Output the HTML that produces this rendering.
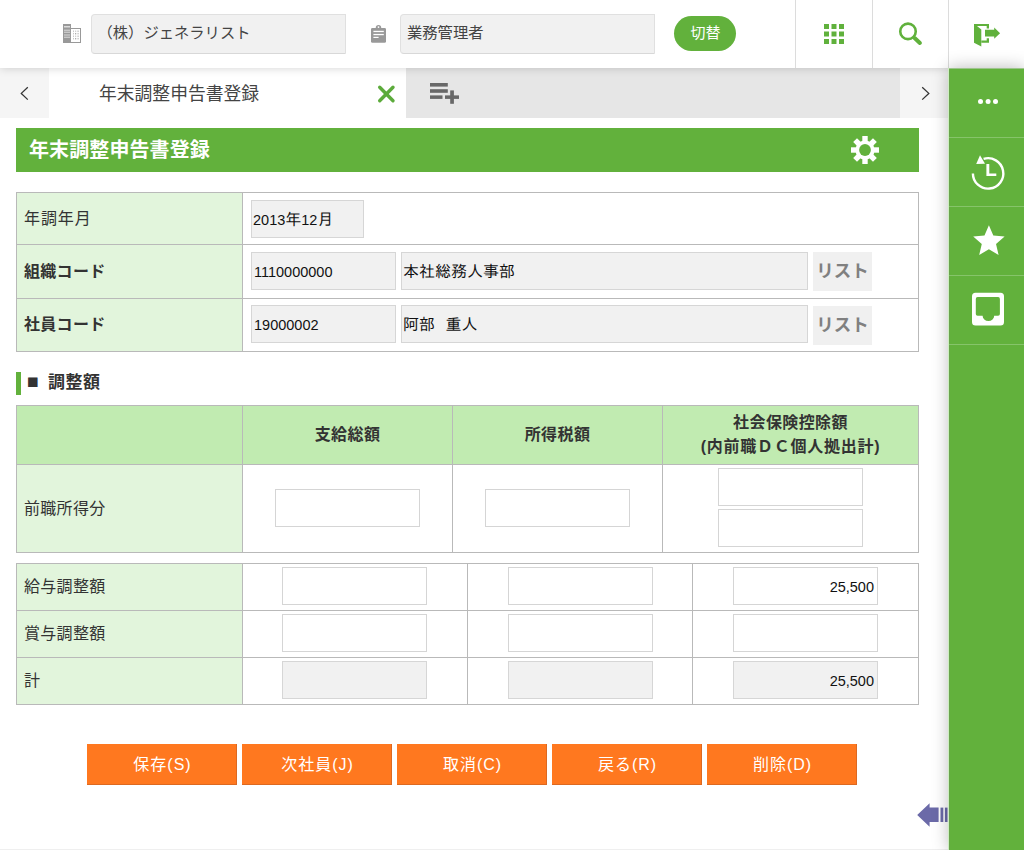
<!DOCTYPE html>
<html lang="ja">
<head>
<meta charset="utf-8">
<title>年末調整申告書登録</title>
<style>
*{box-sizing:border-box;margin:0;padding:0}
html,body{width:1024px;height:850px;overflow:hidden;background:#fff}
body{position:relative;font-family:"Liberation Sans","Noto Sans CJK JP",sans-serif;font-size:16px;color:#333}
.abs{position:absolute}
/* header */
#hdr{position:absolute;left:0;top:0;width:1024px;height:68px;background:#fff;box-shadow:0 0 9px rgba(0,0,0,.18);z-index:3}
.hin{position:absolute;top:14px;height:40px;background:#f1f1f1;border:1px solid #e0e0e0;border-bottom-color:#d8d8d8;border-radius:4px 0 0 4px;font-size:15.3px;line-height:36px;color:#444;white-space:nowrap;overflow:hidden}
.vdiv{position:absolute;top:0;width:1px;height:68px;background:#dcdcdc}
#sw{position:absolute;left:674px;top:16px;width:62px;height:35px;border-radius:18px;background:#62b13c;color:#fff;font-size:15px;line-height:34px;text-align:center;padding-left:1px}
/* tab bar */
#tabs{position:absolute;left:0;top:68px;width:949px;height:50px;background:#e6e6e6}
#tabs .arr{position:absolute;top:0;width:49px;height:50px;background:#f5f5f5}
#tab1{position:absolute;left:49px;top:0;width:357px;height:50px;background:#fff;font-size:17.8px;line-height:52px;color:#444}
/* sidebar */
#side{position:absolute;left:949px;top:68px;width:75px;height:782px;background:#62b13c;border-top:1px solid #9dc48c;box-shadow:-1px 0 0 #cdeec0,0 0 16px rgba(0,0,0,.28),inset 1px 0 0 #6aa34d;z-index:4}
#side .it{position:relative;height:69px;border-bottom:1px solid #86c46a}
/* main */
#ttl{position:absolute;left:16px;top:128px;width:903px;height:44px;background:#62b13c;color:#fff;font-weight:bold;font-size:20px;line-height:45px;padding-left:13px;letter-spacing:.1px}
.c{position:absolute;border:1px solid #b9b9b9;background:#fff}
.c.lb{background:#e2f5dc;font-size:16px;color:#333;letter-spacing:.3px}
.c.hd{background:#c1ebb1;font-weight:bold;text-align:center;font-size:16px;line-height:24px;color:#333;letter-spacing:.4px}
.c .vt{position:absolute;left:7px;top:50%;transform:translateY(-50%);white-space:nowrap;line-height:24px}
.c .vc{position:absolute;left:0;right:0;top:50%;transform:translateY(-50%);white-space:nowrap}
.in{position:absolute;height:38px;border:1px solid #d5d5d5;background:#fff;font-family:"Liberation Sans","IPAGothic","Noto Sans CJK JP",sans-serif;font-size:14.5px;line-height:38px;color:#111;white-space:nowrap;overflow:hidden}
.in .k,.in.k{font-size:16px}
.in.ro{background:#f1f1f1;border-color:#d6d6d6}
.in.num{text-align:right;padding-right:3px}
.lst{position:absolute;width:59px;height:39px;background:#f0f0f0;color:#808080;font-weight:bold;font-size:17.5px;line-height:38px;text-align:center}
#sec{position:absolute;left:16px;top:372px;width:200px;height:23px;border-left:5px solid #62b13c;font-weight:bold;color:#333;white-space:nowrap}
#sec .sq{position:absolute;left:6px;top:-1px;font-size:19.5px;line-height:20px}
#sec .st{position:absolute;left:27px;top:1px;font-size:17px;line-height:20px;letter-spacing:.5px}
.btn{position:absolute;top:744px;width:150px;height:41px;background:#ff781f;box-shadow:inset -1px -1px 0 rgba(120,60,40,.25);color:#fff;font-size:16px;line-height:41px;text-align:center;letter-spacing:1px;padding-left:1px}
</style>
</head>
<body>

<!-- HEADER -->
<div id="hdr">
  <div class="hin" style="left:91px;width:255px;padding-left:5.5px">（株）ジェネラリスト</div>
  <div class="hin" style="left:400px;width:255px;padding-left:6px">業務管理者</div>
  <div id="sw">切替</div>
<svg class="abs" style="left:0;top:0" width="1024" height="68" viewBox="0 0 1024 68">
    <!-- building -->
    <rect x="63" y="24" width="8" height="19" fill="#999"/>
    <g fill="#dcdcdc"><rect x="64" y="26" width="6" height="1.5"/><rect x="64" y="29.7" width="6" height="1"/><rect x="64" y="31.7" width="6" height="1"/><rect x="64" y="34.5" width="6" height="1"/><rect x="64" y="36.7" width="6" height="1"/></g>
    <rect x="71" y="28" width="10" height="15" fill="#999"/><rect x="71" y="29" width="9" height="13" fill="#fff"/>
    <g fill="#c8c8c8"><rect x="73" y="30.5" width="1" height="1.6"/><rect x="75.2" y="30.5" width="1" height="1.6"/><rect x="77.4" y="30.5" width="1.4" height="1.6"/><rect x="73" y="33" width="1" height="1.4"/><rect x="75.2" y="33" width="1" height="1.4" fill="#999"/><rect x="77.4" y="33" width="1.4" height="1.4"/><rect x="73" y="35.5" width="1" height="1.6"/><rect x="75.2" y="35.5" width="1" height="1.6"/><rect x="77.4" y="35.5" width="1.4" height="1.6"/><rect x="73" y="38" width="1" height="1.4"/><rect x="75.2" y="38" width="1" height="1.4" fill="#999"/><rect x="77.4" y="38" width="1.4" height="1.4"/></g>
    <!-- clipboard (assignment) -->
    <g fill="#999"><rect x="371" y="27.9" width="15" height="14.9" rx="1.4"/><circle cx="378.5" cy="27.6" r="2.7"/></g>
    <g fill="#fff"><circle cx="378.5" cy="27.1" r=".9"/><rect x="373.4" y="30.8" width="10.4" height="1.3"/><rect x="373.4" y="33.9" width="10.4" height="1.3"/><rect x="373.4" y="36.8" width="5.2" height="1.2"/></g>
    <!-- apps grid -->
    <g fill="#60b13c"><rect x="824" y="24" width="5" height="5"/><rect x="831.5" y="24" width="5" height="5"/><rect x="839" y="24" width="5" height="5"/><rect x="824" y="31.5" width="5" height="5"/><rect x="831.5" y="31.5" width="5" height="5"/><rect x="839" y="31.5" width="5" height="5"/><rect x="824" y="39" width="5" height="5"/><rect x="831.5" y="39" width="5" height="5"/><rect x="839" y="39" width="5" height="5"/></g>
    <!-- search -->
    <circle cx="908" cy="31.4" r="7.75" fill="none" stroke="#60b13c" stroke-width="2.6"/>
    <line x1="914.6" y1="38" x2="919.9" y2="43" stroke="#60b13c" stroke-width="4" stroke-linecap="round"/>
    <!-- logout -->
    <g fill="#60b13c"><path d="M974 24H989V28.4H986.7V26H977L981.3 29.5V46.5L974 42.7Z"/><path d="M981.3 40.6H986.7V38.2H989V42.7H981.3Z"/><path d="M985 29.8H994.2V27.6L1000.1 33.2L994.2 38.7V36.4H985Z"/></g>
  </svg>
  <div class="vdiv" style="left:795px"></div>
  <div class="vdiv" style="left:872px"></div>
  <div class="vdiv" style="left:948px"></div>
</div>

<!-- TAB BAR -->
<div id="tabs">
  <div class="arr" style="left:0"></div>
  <div id="tab1"><span style="position:absolute;left:50px;top:0">年末調整申告書登録</span></div>
  <div class="arr" style="left:900px"></div>
  <svg class="abs" style="left:0;top:0" width="949" height="50" viewBox="0 68 949 50">
    <polyline points="27.8,87.2 21.3,93.4 27.8,99.6" fill="none" stroke="#333" stroke-width="1.3"/>
    <polyline points="922.2,87.2 928.8,93.4 922.2,99.6" fill="none" stroke="#333" stroke-width="1.3"/>
    <g stroke="#5cab3b" stroke-width="3.4" stroke-linecap="round"><line x1="379.7" y1="87.2" x2="393" y2="100.7"/><line x1="393" y1="87.2" x2="379.7" y2="100.7"/></g>
    <g fill="#686868"><rect x="430" y="83" width="17.8" height="3.6"/><rect x="430" y="89.2" width="17.8" height="3.6"/><rect x="430" y="95.4" width="12.5" height="3.5"/><rect x="450.2" y="90.4" width="3.7" height="13.4"/><rect x="445" y="95.4" width="14" height="3.5"/></g>
  </svg>
</div>

<!-- SIDEBAR -->
<div id="side">
  <svg class="abs" style="left:0;top:0" width="75" height="781" viewBox="949 69 75 781">
    <g fill="#fff"><circle cx="980.5" cy="101.5" r="2.5"/><circle cx="988.1" cy="101.5" r="2.5"/><circle cx="995.5" cy="101.5" r="2.5"/></g>
    <!-- history -->
    <path d="M972.9 173.4A15.2 15.2 0 1 0 983.6 158.9" fill="none" stroke="#fff" stroke-width="2.4"/>
    <path d="M976.2 163.9L980 155.2L985 163.7Z" fill="#fff"/>
    <path d="M986.4 164H989.3V173.5H996.3V175.9H986.4Z" fill="#fff"/>
    <!-- star -->
    <g transform="translate(970.06 222.06) scale(1.57)" fill="#fff"><path d="M12 17.27L18.18 21l-1.64-7.03L22 9.24l-7.19-.61L12 2 9.19 8.63 2 9.24l5.46 4.73L5.82 21z"/></g>
    <!-- inbox -->
    <path fill="#fff" fill-rule="evenodd" d="M975.5 292.8H1000.5A3.5 3.5 0 0 1 1004 296.3V321.9A3.5 3.5 0 0 1 1000.5 325.4H975.5A3.5 3.5 0 0 1 972 321.9V296.3A3.5 3.5 0 0 1 975.5 292.8ZM977.6 297.1H998.1Q999.9 297.1 999.9 298.9V313.9Q999.9 315.7 998.1 315.7H994.2A5.8 5.2 0 0 1 982.6 315.7H977.6Q975.8 315.7 975.8 313.9V298.9Q975.8 297.1 977.6 297.1Z"/>
  </svg>
  <div class="it"></div>
  <div class="it"></div>
  <div class="it"></div>
  <div class="it"></div>
</div>

<!-- TITLE -->
<div id="ttl">年末調整申告書登録</div>

<svg class="abs" style="left:849px;top:134px" width="32" height="32" viewBox="-16 -16 32 32"><g fill="#fff"><rect x="-2.7" y="-14" width="5.4" height="8" transform="rotate(0)"/><rect x="-2.7" y="-14" width="5.4" height="8" transform="rotate(45)"/><rect x="-2.7" y="-14" width="5.4" height="8" transform="rotate(90)"/><rect x="-2.7" y="-14" width="5.4" height="8" transform="rotate(135)"/><rect x="-2.7" y="-14" width="5.4" height="8" transform="rotate(180)"/><rect x="-2.7" y="-14" width="5.4" height="8" transform="rotate(225)"/><rect x="-2.7" y="-14" width="5.4" height="8" transform="rotate(270)"/><rect x="-2.7" y="-14" width="5.4" height="8" transform="rotate(315)"/><circle r="9.6"/></g><circle r="5.9" fill="#62b13c"/></svg>
<!-- TABLE 1 -->
<div class="c lb" style="left:16px;top:192px;width:227px;height:53px;"><span class="vt" style="letter-spacing:.9px">年調年月</span></div>
<div class="c " style="left:242px;top:192px;width:677px;height:53px;"></div>
<div class="c lb" style="left:16px;top:244px;width:227px;height:55px;"><span class="vt" style="font-weight:bold;">組織コード</span></div>
<div class="c " style="left:242px;top:244px;width:677px;height:55px;"></div>
<div class="c lb" style="left:16px;top:298px;width:227px;height:54px;"><span class="vt" style="font-weight:bold;">社員コード</span></div>
<div class="c " style="left:242px;top:298px;width:677px;height:54px;"></div>
<div class="in ro" style="left:251px;top:200px;width:113px;padding-left:1px">2013<span class="k">年</span>12<span class="k">月</span></div>
<div class="in ro" style="left:251px;top:252px;width:145px;padding-left:2px">1110000000</div>
<div class="in ro k" style="left:401px;top:252px;width:407px;padding-left:1px">本社総務人事部</div>
<div class="lst" style="left:813px;top:252px">リスト</div>
<div class="in ro" style="left:251px;top:305px;width:145px;padding-left:2px">19000002</div>
<div class="in ro k" style="left:401px;top:305px;width:407px;padding-left:1px">阿部<span style="letter-spacing:-5.5px">　</span>重人</div>
<div class="lst" style="left:813px;top:306px">リスト</div>
<!-- SECTION HEADING -->
<div id="sec"><span class="sq">■</span><span class="st">調整額</span></div>
<!-- TABLE 2 -->
<div class="c hd" style="left:16px;top:405px;width:227px;height:60px;"><span class="vc"></span></div>
<div class="c hd" style="left:242px;top:405px;width:211px;height:60px;"><span class="vc">支給総額</span></div>
<div class="c hd" style="left:452px;top:405px;width:211px;height:60px;"><span class="vc">所得税額</span></div>
<div class="c hd" style="left:662px;top:405px;width:257px;height:60px;"><span class="vc">社会保険控除額<br><span style="letter-spacing:.75px">(内前職ＤＣ個人拠出計)</span></span></div>
<div class="c lb" style="left:16px;top:464px;width:227px;height:89px;"><span class="vt">前職所得分</span></div>
<div class="c " style="left:242px;top:464px;width:211px;height:89px;"></div>
<div class="c " style="left:452px;top:464px;width:211px;height:89px;"></div>
<div class="c " style="left:662px;top:464px;width:257px;height:89px;"></div>
<div class="in" style="left:275px;top:489px;width:145px"></div>
<div class="in" style="left:485px;top:489px;width:145px"></div>
<div class="in" style="left:718px;top:468px;width:145px"></div>
<div class="in" style="left:718px;top:509px;width:145px"></div>
<!-- TABLE 3 -->
<div class="c lb" style="left:16px;top:563px;width:227px;height:48px;"><span class="vt">給与調整額</span></div>
<div class="c " style="left:242px;top:563px;width:226px;height:48px;"></div>
<div class="c " style="left:467px;top:563px;width:226px;height:48px;"></div>
<div class="c " style="left:692px;top:563px;width:227px;height:48px;"></div>
<div class="c lb" style="left:16px;top:610px;width:227px;height:48px;"><span class="vt">賞与調整額</span></div>
<div class="c " style="left:242px;top:610px;width:226px;height:48px;"></div>
<div class="c " style="left:467px;top:610px;width:226px;height:48px;"></div>
<div class="c " style="left:692px;top:610px;width:227px;height:48px;"></div>
<div class="c lb" style="left:16px;top:657px;width:227px;height:48px;"><span class="vt">計</span></div>
<div class="c " style="left:242px;top:657px;width:226px;height:48px;"></div>
<div class="c " style="left:467px;top:657px;width:226px;height:48px;"></div>
<div class="c " style="left:692px;top:657px;width:227px;height:48px;"></div>
<div class="in num" style="left:282px;top:567px;width:145px"></div>
<div class="in num" style="left:508px;top:567px;width:145px"></div>
<div class="in num" style="left:733px;top:567px;width:145px">25,500</div>
<div class="in num" style="left:282px;top:614px;width:145px"></div>
<div class="in num" style="left:508px;top:614px;width:145px"></div>
<div class="in num" style="left:733px;top:614px;width:145px"></div>
<div class="in ro num" style="left:282px;top:661px;width:145px"></div>
<div class="in ro num" style="left:508px;top:661px;width:145px"></div>
<div class="in ro num" style="left:733px;top:661px;width:145px">25,500</div>
<svg class="abs" style="left:910px;top:798px" width="40" height="34" viewBox="910 798 40 34"><g fill="#6b6aa8"><path d="M917.2 815L929.6 803.2V807.6H938.6V822H929.6V826.8Z"/><rect x="940.5" y="807.6" width="2.8" height="14.4"/><rect x="944.9" y="807.6" width="2.6" height="14.4"/></g></svg>
<div class="abs" style="left:0;top:849px;width:949px;height:1px;background:#efefef"></div>
<!-- BUTTONS -->
<div class="btn" style="left:87px">保存(S)</div>
<div class="btn" style="left:242px">次社員(J)</div>
<div class="btn" style="left:397px">取消(C)</div>
<div class="btn" style="left:552px">戻る(R)</div>
<div class="btn" style="left:707px">削除(D)</div>

</body>
</html>
